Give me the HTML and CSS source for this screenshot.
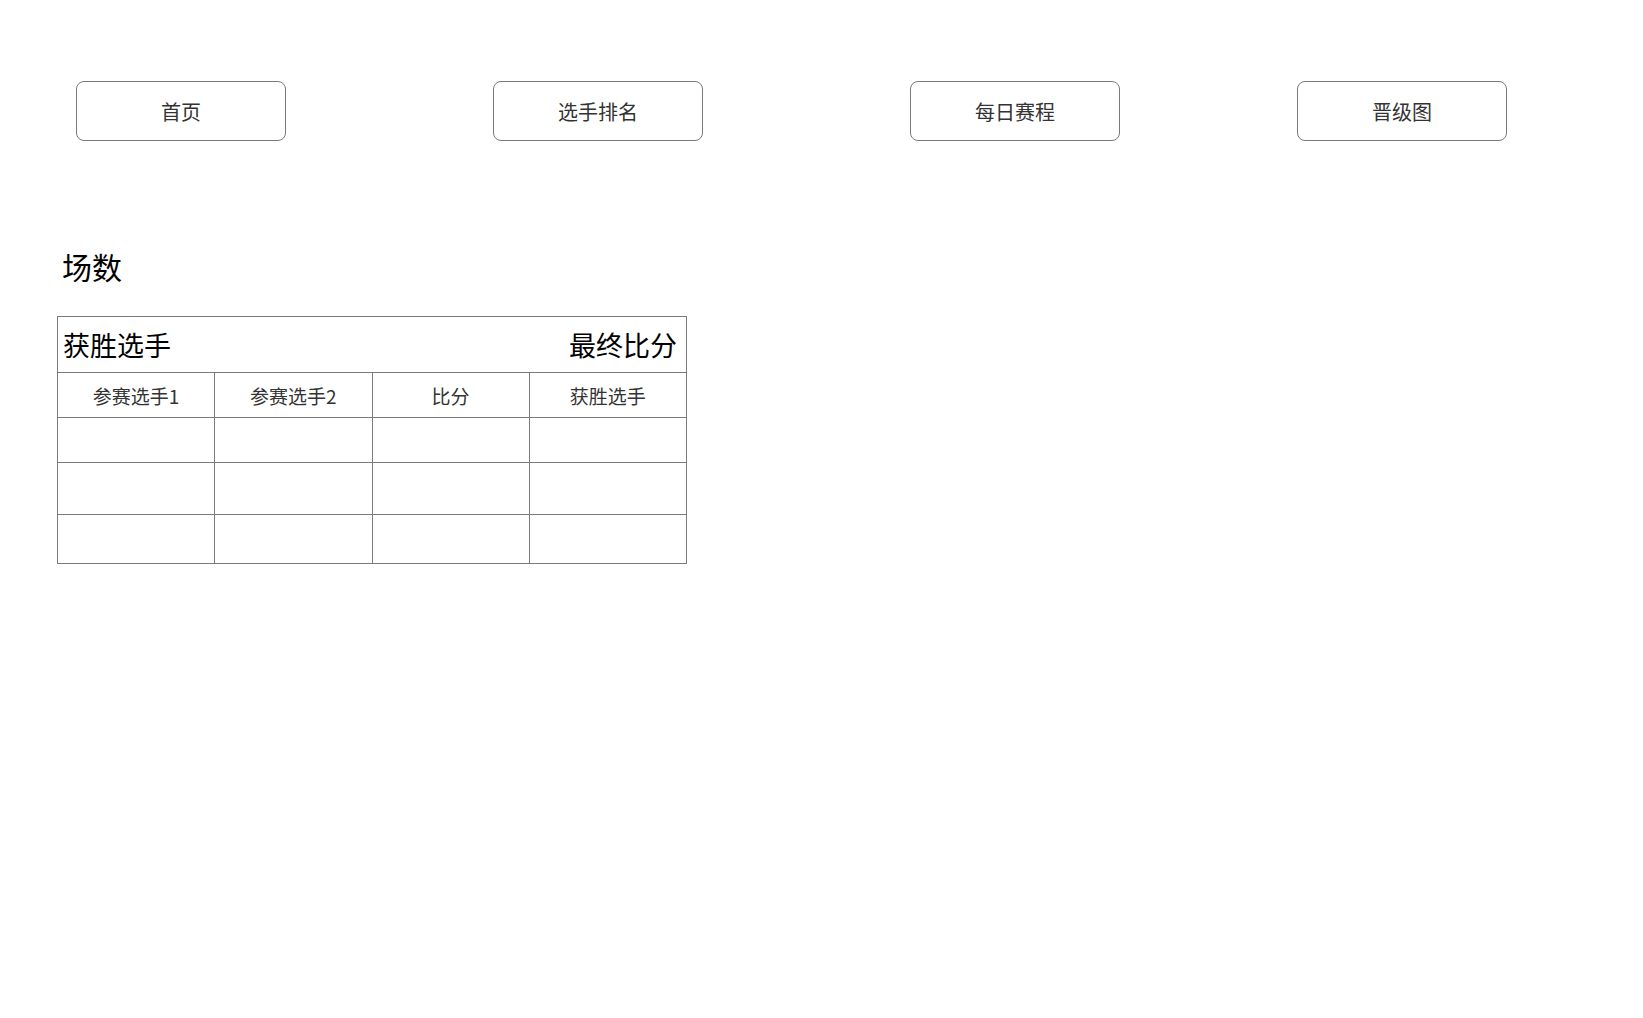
FILE: index.html
```html
<!DOCTYPE html>
<html lang="zh-CN">
<head>
    <meta charset="UTF-8">
    <meta name="viewport" content="width=device-width, initial-scale=1.0">
    <title>每日赛程</title>
    <link rel="stylesheet" href="styles.css">
</head>
<body>
    <nav class="nav">
        <button class="nav-btn">首页</button>
        <button class="nav-btn">选手排名</button>
        <button class="nav-btn">每日赛程</button>
        <button class="nav-btn">晋级图</button>
    </nav>

    <div class="match">
        <h2 class="match-title">场数</h2>

        <div class="match-head">
            <span>获胜选手</span>
            <span>最终比分</span>
        </div>
        <table class="match-table">
            <thead>
                <tr>
                    <th>参赛选手1</th>
                    <th>参赛选手2</th>
                    <th>比分</th>
                    <th>获胜选手</th>
                </tr>
            </thead>
            <tbody>
                <tr><td></td><td></td><td></td><td></td></tr>
                <tr><td></td><td></td><td></td><td></td></tr>
                <tr><td></td><td></td><td></td><td></td></tr>
            </tbody>
        </table>
    </div>
</body>
</html>
```

FILE: styles.css
```css
body {
    margin: 0;
    font-family: "Noto Sans CJK SC", "Noto Sans", sans-serif;
    color: #000;
    background: #fff;
}

.nav {
    display: grid;
    grid-template-columns: 417px 417px 387px 210px;
    padding: 81px 0 0 76px;
}

.nav-btn {
    width: 210px;
    height: 60px;
    background: #fff;
    border: 1px solid #7a7a7a;
    border-radius: 8px;
    font-family: inherit;
    font-size: 20px;
    color: #333;
    cursor: pointer;
}

.nav-btn:hover {
    background: #f4f4f4;
}

.match {
    padding: 107px 0 0 57px;
}

.match-title {
    margin: 0 0 32px 5px;
    font-size: 30px;
    line-height: 36px;
    font-weight: normal;
}

.match-head {
    width: 630px;
    height: 56px;
    display: flex;
    align-items: center;
    justify-content: space-between;
    padding: 0 9px 0 5px;
    box-sizing: border-box;
    border: 1px solid #7a7a7a;
    border-bottom: none;
    font-size: 27px;
}

.match-table {
    width: 630px;
    border-collapse: collapse;
    table-layout: fixed;
}

.match-table th,
.match-table td {
    border: 1px solid #7a7a7a;
    padding: 0;
}

.match-table th {
    height: 44px;
    font-size: 19px;
    font-weight: normal;
    color: #333;
}

.match-table tbody tr:nth-child(1) td {
    height: 44px;
}

.match-table tbody tr:nth-child(2) td {
    height: 51px;
}

.match-table tbody tr:nth-child(3) td {
    height: 48px;
}
```
